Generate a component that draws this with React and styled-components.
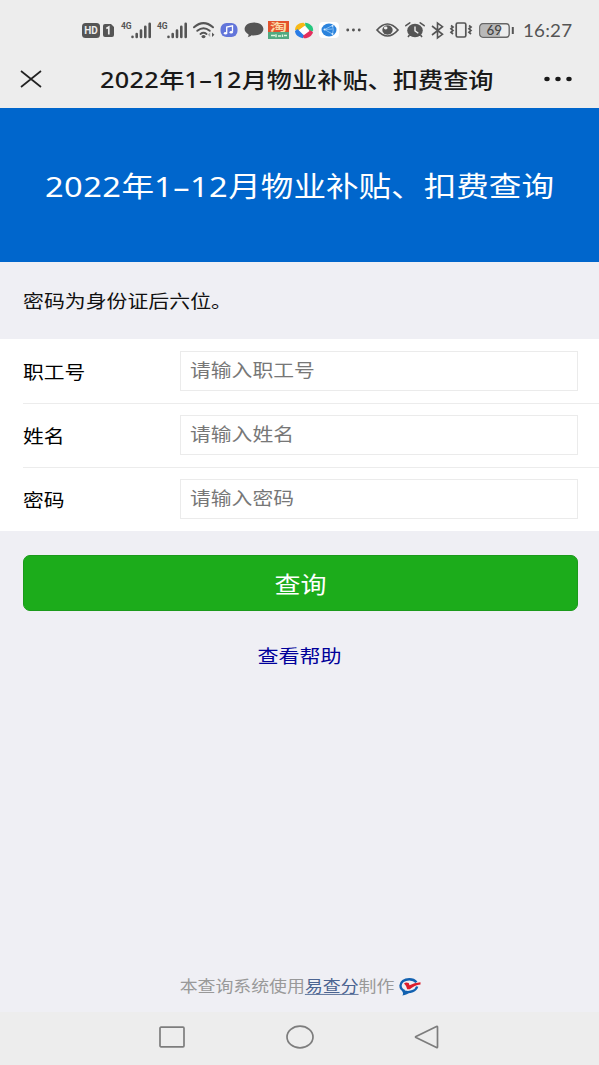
import React from 'react';
import styled, { createGlobalStyle } from 'styled-components';

const GlobalStyle = createGlobalStyle`
  * {
    box-sizing: border-box;
  }

  body {
    margin: 0;
    background: #efeff4;
    font-family: 'Noto Sans CJK SC', 'Noto Sans', sans-serif;
  }
`;

const fields = [
  { name: 'number', label: '职工号' },
  { name: 'name', label: '姓名' },
  { name: 'password', label: '密码' },
];

const Signal = ({ left }) => (
  <Icon width="31" height="20" viewBox="0 0 31 20" $left={left}>
    <text x="0" y="8.5" fontSize="8.5" fontWeight="700" fontFamily="Roboto" fill="#555" textLength="10.5">
      4G
    </text>
    <g stroke="#555" strokeWidth="2.6" strokeLinecap="round">
      <path d="M11.5 16.8v.2M15.7 14v3M20 10.5V17M24.3 6.8V17M28.7 3.7V17" />
    </g>
  </Icon>
);

const StatusIcons = () => (
  <>
    <Icon width="18" height="15" viewBox="0 0 18 15" $left={82}>
      <rect width="18" height="15" rx="3.5" fill="#555" />
      <text x="2.3" y="11.3" fontSize="10" fontWeight="700" fontFamily="Roboto" fill="#ededed" textLength="13.4">
        HD
      </text>
    </Icon>
    <Icon width="11" height="13" viewBox="0 0 11 13" $left={3}>
      <path d="M2 0h6l3 3v8q0 2-2 2H2q-2 0-2-2V2q0-2 2-2z" fill="#555" />
      <path d="M3.3 4.5 5.8 3v7.5" fill="none" stroke="#ededed" strokeWidth="1.7" />
    </Icon>
    <Signal left={7} />
    <Signal left={5} />
    <Icon width="22" height="17" viewBox="0 0 22 17" $left={5}>
      <g fill="none" stroke="#555" strokeWidth="2" strokeLinecap="round">
        <path d="M1 5.3Q10.5-3 20 5.3M4.3 8.8q6.2-5.2 12.4 0M7.5 12q3-2.4 6 0" />
      </g>
      <ellipse cx="10.5" cy="14.6" rx="2" ry="1.6" fill="#555" />
      <path d="m17.2 10.5-2.4 2.3 2.4 2.2z" fill="#aaa" />
      <path d="m19 10.5 2.4 2.3L19 15z" fill="#555" />
    </Icon>
    <Icon width="18" height="14" viewBox="0 0 18 14" $left={5}>
      <rect x=".5" width="17" height="14" rx="6" fill="#6275da" />
      <path d="M6.7 10V4l5.8-1.2v6" fill="none" stroke="#fff" strokeWidth="1.3" />
      <ellipse cx="5.5" cy="10.2" rx="1.7" ry="1.3" fill="#fff" />
      <ellipse cx="11.2" cy="9.2" rx="1.7" ry="1.3" fill="#fff" />
    </Icon>
    <Icon width="20" height="16" viewBox="0 0 20 16" $left={6}>
      <path
        d="M10 .5c5.3 0 9.4 2.8 9.4 6.6S15.3 13.5 10 13.5c-1 0-1.7-.1-2.5-.2-1 .9-2.4 1.6-3.8 1.9.6-.8.9-1.7.9-2.7C2.2 11.3.6 9.4.6 7.1.6 3.3 4.7.5 10 .5z"
        fill="#555"
      />
    </Icon>
    <Icon width="21" height="18" viewBox="0 0 21 18" $left={4}>
      <rect width="21" height="11.5" fill="#e3532c" />
      <rect y="11" width="21" height="7" fill="#52a981" />
      <text x="2" y="9.6" fontSize="10" fontWeight="700" fill="#fbd9a4" textLength="17" lengthAdjust="spacingAndGlyphs">
        淘
      </text>
      <path d="M3 14.5h4M8 13.2v3M10 15h3M14.5 13.5v2.5M16 14.5h3" stroke="#e2f6df" strokeWidth="1.4" />
    </Icon>
    <Icon width="20" height="17" viewBox="0 0 20 17" $left={5}>
      <path d="M1 8C1 3.5 5 .5 9.5.7L12 3 4.5 8.5z" fill="#f7b916" />
      <path d="M11 .8C16 1 19.3 4.5 19.2 8.5L17 10.5 11.5 4z" fill="#25c77e" />
      <path d="M19 10C18 14 14.5 16.5 10 16.3L8 14l7.5-6z" fill="#e42e5e" />
      <path d="M9 16.2C4.5 15.5 1 12.5 1 9l2.5-2L9.5 13z" fill="#297ce6" />
      <path d="m5 8 5.5-4L15.5 9 10 13z" fill="#fff" />
    </Icon>
    <Icon width="20" height="16" viewBox="0 0 20 16" $left={5}>
      <rect width="20" height="16" rx="4" fill="#fff" />
      <ellipse cx="10" cy="8" rx="7.5" ry="6.4" fill="#2b83dd" />
      <path d="M13.5 3.5 5.5 7.5l8 4.5q1.5-4 0-8.5M5.5 7.5l8-.5" fill="none" stroke="#9ccbf5" strokeWidth=".8" />
      <circle cx="13.5" cy="3.8" r="1" fill="#d6ebff" />
      <circle cx="5.5" cy="7.5" r="1" fill="#d6ebff" />
      <circle cx="13.5" cy="12" r="1" fill="#d6ebff" />
    </Icon>
    <Icon width="15" height="4" viewBox="0 0 15 4" $left={7}>
      <path d="M1.7 2h.1M7.4 2h.1M13.2 2h.1" stroke="#555" strokeWidth="2.8" strokeLinecap="round" />
    </Icon>
    <Icon width="23" height="14" viewBox="0 0 23 14" $left={15}>
      <path d="M1 7Q11.5-5 22 7 11.5 19 1 7z" fill="none" stroke="#555" strokeWidth="1.7" />
      <ellipse cx="11.5" cy="7" rx="5.2" ry="4.7" fill="#555" />
      <ellipse cx="9.7" cy="5" rx="1.8" ry="1.4" fill="#ededed" />
    </Icon>
    <Icon width="20" height="16" viewBox="0 0 20 16" $left={6}>
      <path d="M.8 3.7 4.8.8M19.2 3.7l-4-2.9" stroke="#555" strokeWidth="1.5" strokeLinecap="round" />
      <path d="m4.5 13-1.5 2M15.5 13l1.5 2" stroke="#555" strokeWidth="1.6" />
      <ellipse cx="10" cy="8.5" rx="7.8" ry="6.7" fill="#555" />
      <path d="M10 4.5v4.3l3.3 2.4" fill="none" stroke="#ededed" strokeWidth="1.4" />
    </Icon>
    <Icon width="13" height="17" viewBox="0 0 13 17" $left={6}>
      <path d="m1 4 10.5 8.3L6.5 16V1l5 3.7L1 13" fill="none" stroke="#555" strokeWidth="1.6" />
    </Icon>
    <Icon width="22" height="16" viewBox="0 0 22 16" $left={6}>
      <rect x="6.2" y="1" width="9.6" height="14" rx="1.5" fill="none" stroke="#555" strokeWidth="1.7" />
      <path
        d="m1 3.5 2 1.5-2 1.800 2 1.700-2 1.700 2 1.800M19 3.500l2 1.500-2 1.800 2 1.700-2 1.700 2 1.800"
        fill="none"
        stroke="#555"
        strokeWidth="1.7"
      />
    </Icon>
    <Icon width="35" height="15" viewBox="0 0 35 15" $left={7}>
      <rect x="2" y="2" width="19" height="11" fill="#b9b9b9" />
      <rect x=".8" y=".8" width="29.4" height="13.4" rx="3" fill="none" stroke="#666" strokeWidth="1.4" />
      <rect x="32.8" y="4" width="2" height="7" fill="#555" />
      <text x="7.5" y="12" fontSize="12.5" fontWeight="500" fontFamily="Lato" fill="#444" textLength="15.5" lengthAdjust="spacingAndGlyphs">
        69
      </text>
    </Icon>
  </>
);

// The page title is set in two faces, one for latin digits and one for hanzi
const TitleText = () => (
  <>
    <Digits>2022</Digits>年<Digits>1–12</Digits>月物业补贴、扣费查询
  </>
);

export default function App() {
  return (
    <Page>
      <GlobalStyle />
      <StatusBar>
        <StatusIcons />
        <Clock>16:27</Clock>
      </StatusBar>
      <NavBar>
        <svg width="22" height="18" viewBox="0 0 22 18">
          <path d="m1 1 20 16M21 1 1 17" stroke="#222" strokeWidth="1.7" />
        </svg>
        <NavTitle>
          <TitleText />
        </NavTitle>
        <svg width="28" height="6" viewBox="0 0 28 6">
          <ellipse cx="3" cy="3" rx="2.7" ry="2.2" fill="#191919" />
          <ellipse cx="14" cy="3" rx="2.7" ry="2.2" fill="#191919" />
          <ellipse cx="25" cy="3" rx="2.7" ry="2.2" fill="#191919" />
        </svg>
      </NavBar>

      <Banner>
        <BannerTitle>
          <TitleText />
        </BannerTitle>
      </Banner>
      <Notice>
        <Text>密码为身份证后六位。</Text>
      </Notice>

      <Form>
        {fields.map(field => (
          <Row key={field.name}>
            <Label htmlFor={field.name}>
              <Text>{field.label}</Text>
            </Label>
            <InputBox>
              <Input id={field.name} placeholder={`请输入${field.label}`} />
            </InputBox>
          </Row>
        ))}
      </Form>

      <Submit type="button">
        <Text>查询</Text>
      </Submit>
      <Help href="#help">
        <Text>查看帮助</Text>
      </Help>

      <Footer>
        <FooterText>
          本查询系统使用<a href="#home">易查分</a>制作
        </FooterText>
        <svg width="22" height="18" viewBox="0 0 22 18">
          <path
            d="M17.5 4.2C15.8 2.2 13.2 1.2 10.3 1.2 5.3 1.2 1.5 4 1.5 7.6c0 2.7 1.9 4.7 4.2 5.6M6 13.8c5.5 1 10.8-.8 12.2-5.3"
            fill="none"
            stroke="#1261b0"
            strokeWidth="2.4"
          />
          <path d="m2.8 12.4 8.2 1.3c-1.7 2.3-4.2 3.3-7.7 3.8 1.2-1.4 1-2.8-.5-5.1z" fill="#1261b0" />
          <path d="M5 5.5q2-1.8 4.7-.5l.8 2.3Q15 4.8 21.5 4.2v2.2Q15.5 7 10.8 11.3L8.2 11.2Q7.5 7.7 5 5.5z" fill="#dc1e2c" />
        </svg>
      </Footer>

      <SystemNav>
        <svg width="26" height="22" viewBox="0 0 26 22">
          <rect x="1" y="1.2" width="24" height="19.6" rx="1" />
        </svg>
        <svg width="28" height="24" viewBox="0 0 28 24">
          <ellipse cx="14" cy="12" rx="13" ry="10.8" />
        </svg>
        <svg width="25" height="24" viewBox="0 0 25 24">
          <path d="M22.5 1.5Q23.5 1 23.5 2.3v19.4q0 1.3-1 .8L2 12.6q-1-.6 0-1.2z" />
        </svg>
      </SystemNav>
    </Page>
  );
}

const Page = styled.div`
  display: flex;
  flex-direction: column;
  width: 599px;
  height: 1065px;
  overflow: hidden;
  background: #efeff4;
`;

const StatusBar = styled.div`
  display: flex;
  align-items: center;
  height: 60px;
  flex: none;
  background: #ededed;
`;

const Icon = styled.svg`
  flex: none;
  margin-left: ${props => props.$left}px;
  overflow: visible;
`;

const Clock = styled.span`
  margin-left: 9px;
  padding-top: 2px;
  font-family: Lato, sans-serif;
  font-size: 18.8px;
  letter-spacing: 0.2px;
  line-height: 24px;
  color: #555;
  transform: scaleY(0.9);
`;

const NavBar = styled.header`
  display: flex;
  align-items: center;
  flex: none;
  height: 48px;
  padding: 0 27px 10px 20px;
  background: #ededed;

  svg:last-child {
    margin-left: auto;
  }
`;

// Glyphs are wider than they are tall across the whole page
const Text = styled.span`
  display: inline-block;
  white-space: nowrap;
  transform: scaleY(0.86);
`;

const Digits = styled.span`
  font-family: 'Noto Sans', sans-serif;
  letter-spacing: 0.015em;
`;

const NavTitle = styled(Text)`
  margin-left: 58px;
  padding-bottom: 2px;
  font-size: 25.2px;
  font-weight: 500;
  line-height: 36px;
  color: #191919;
`;

const Banner = styled.div`
  display: flex;
  align-items: center;
  justify-content: center;
  flex: none;
  height: 154px;
  padding-top: 2px;
  background: #0066cc;
`;

const BannerTitle = styled(Text).attrs({ as: 'h1' })`
  margin: 0;
  font-size: 32.6px;
  font-weight: 400;
  line-height: 46px;
  color: #fff;
`;

const Notice = styled.div`
  display: flex;
  align-items: center;
  flex: none;
  height: 77px;
  padding: 0 0 2px 23px;
  font-size: 20.9px;
  color: #111;
`;

const Form = styled.form`
  flex: none;
  height: 192px;
  background: #fff;
`;

const Row = styled.div`
  display: flex;
  align-items: center;
  height: 64px;
  margin-left: 23px;
  padding-right: 21px;

  & + & {
    box-shadow: inset 0 1px #ececec;
  }
`;

const Label = styled.label`
  width: 157px;
  padding-bottom: 1px;
  font-size: 20.8px;
  color: #000;
`;

const InputBox = styled.div`
  display: flex;
  align-items: flex-start;
  flex: 1;
  height: 40px;
  border: 1px solid #ebebeb;
`;

const Input = styled.input`
  width: 100%;
  height: 34px;
  padding: 0 9px;
  border: 0;
  outline: 0;
  background: transparent;
  font-family: inherit;
  font-size: 20.8px;
  transform: scaleY(0.86);

  &::placeholder {
    color: #777;
    opacity: 1;
  }
`;

const Submit = styled.button`
  flex: none;
  height: 56px;
  margin: 24px 21px 0 23px;
  padding: 0;
  border: 1px solid #1b9a1b;
  border-radius: 7px;
  background: #1cac1b;
  font-family: inherit;
  font-size: 26px;
  color: #fff;
`;

const Help = styled.a`
  align-self: center;
  margin-top: 28px;
  font-size: 21px;
  line-height: 32px;
  color: #00009a;
  text-decoration: none;
`;

const Footer = styled.footer`
  display: flex;
  align-items: center;
  justify-content: center;
  gap: 5px;
  height: 50px;
  margin-top: auto;
  padding-left: 2px;
`;

const FooterText = styled(Text)`
  padding-bottom: 5px;
  font-size: 17.9px;
  line-height: 26px;
  color: #999;

  a {
    color: #4b6491;
    text-decoration-thickness: 1px;
    text-underline-offset: 2px;
  }
`;

const SystemNav = styled.nav`
  display: flex;
  align-items: center;
  justify-content: space-between;
  flex: none;
  height: 53px;
  padding: 0 160px 3px 159px;
  background: #ededed;

  svg {
    fill: none;
    stroke: #7d7d7d;
    stroke-width: 1.7;
  }
`;
